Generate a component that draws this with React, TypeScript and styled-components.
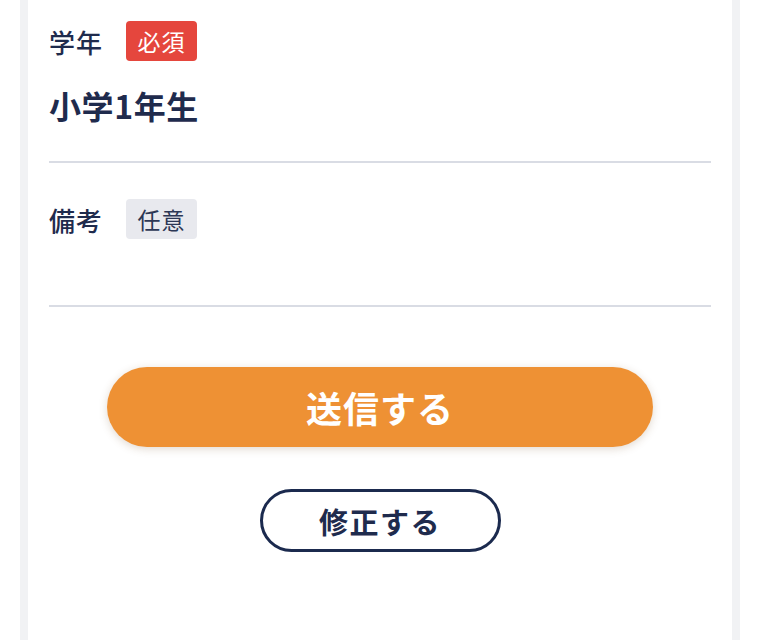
import React from 'react';
import styled, { createGlobalStyle } from 'styled-components';

const GlobalStyle = createGlobalStyle`
  html, body {
    margin: 0;
    padding: 0;
    background: #ffffff;
    font-family: "Noto Sans CJK JP", "Noto Sans", sans-serif;
    color: #1f2b4d;
  }
`;

const Card = styled.div`
  margin: 0 20px;
  min-height: 640px;
  border-left: 8px solid #f1f2f4;
  border-right: 8px solid #f1f2f4;
  background: #ffffff;
  padding: 0 21px;
  box-sizing: border-box;
`;

const Field = styled.div<{ $first?: boolean }>`
  padding-top: ${({ $first }) => ($first ? '21px' : '36px')};
  border-bottom: 2px solid #d9dce4;
`;

const LabelRow = styled.div`
  display: flex;
  align-items: center;
  gap: 23px;
  height: 40px;
`;

const Label = styled.span`
  font-size: 26px;
  font-weight: 500;
  letter-spacing: 1px;
  color: #1f2b4d;
`;

const Badge = styled.span<{ $required?: boolean }>`
  display: inline-flex;
  align-items: center;
  justify-content: center;
  width: 71px;
  height: 40px;
  border-radius: 4px;
  font-size: 23px;
  font-weight: 400;
  letter-spacing: 1px;
  background: ${({ $required }) => ($required ? '#e5463d' : '#e8e9ee')};
  color: ${({ $required }) => ($required ? '#ffffff' : '#2c3755')};
`;

const Value = styled.div<{ $empty?: boolean }>`
  padding: ${({ $empty }) => ($empty ? '0' : '24px 0 36px')};
  height: ${({ $empty }) => ($empty ? '66px' : 'auto')};
  font-size: 32px;
  line-height: 40px;
  font-weight: 700;
  letter-spacing: 0.6px;
  color: #1f2b4d;
`;

const Actions = styled.div`
  display: flex;
  flex-direction: column;
  align-items: center;
  padding-top: 60px;
  gap: 42px;
`;

const SubmitButton = styled.button`
  width: 546px;
  height: 80px;
  border: none;
  border-radius: 40px;
  background: #ee9134;
  box-shadow: 0 2px 8px rgba(120, 80, 40, 0.22);
  color: #ffffff;
  font-family: inherit;
  font-size: 36px;
  font-weight: 700;
  letter-spacing: 1px;
  cursor: pointer;
`;

const EditButton = styled.button`
  width: 241px;
  height: 63px;
  border: 3px solid #1b2a4e;
  border-radius: 32px;
  background: #ffffff;
  color: #1f2b4d;
  font-family: inherit;
  font-size: 29px;
  font-weight: 700;
  letter-spacing: 1.5px;
  cursor: pointer;
`;

export default function App() {
  return (
    <>
      <GlobalStyle />
      <Card>
        <Field $first>
          <LabelRow>
            <Label>学年</Label>
            <Badge $required>必須</Badge>
          </LabelRow>
          <Value>小学1年生</Value>
        </Field>
        <Field>
          <LabelRow>
            <Label>備考</Label>
            <Badge>任意</Badge>
          </LabelRow>
          <Value $empty />
        </Field>
        <Actions>
          <SubmitButton>送信する</SubmitButton>
          <EditButton>修正する</EditButton>
        </Actions>
      </Card>
    </>
  );
}
